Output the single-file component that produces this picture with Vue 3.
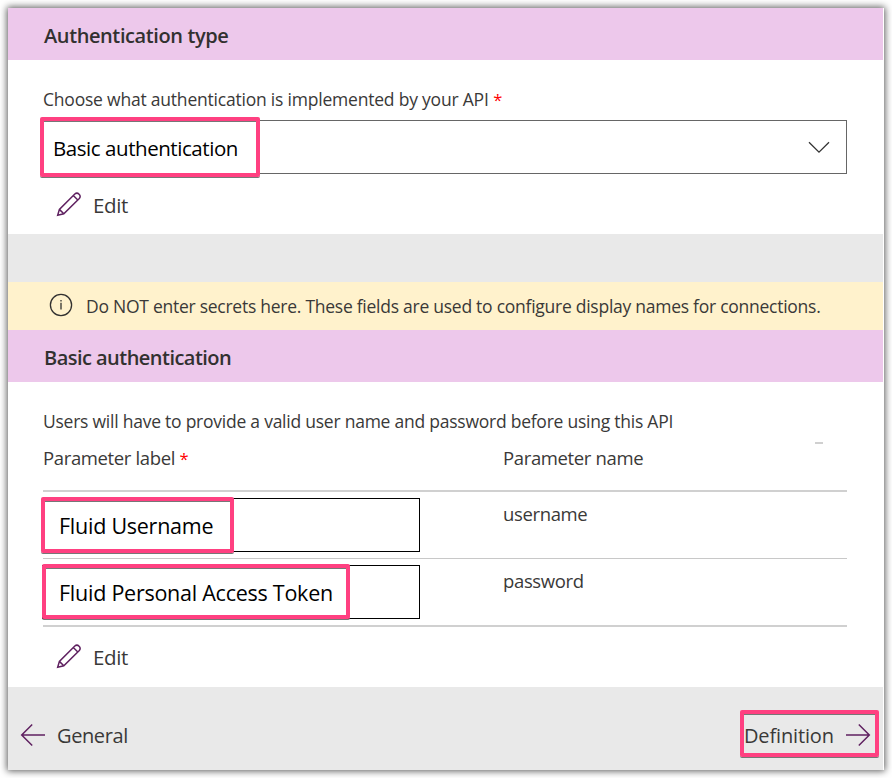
<script setup>
const rows = [
  { label: 'Fluid Username', name: 'username', cls: 'user' },
  { label: 'Fluid Personal Access Token', name: 'password', cls: 'token' },
]
</script>

<template>
  <div class="page">
    <main class="panel">
      <header class="head"><h2 class="h-type">Authentication type</h2></header>
      <section class="auth">
        <label class="small"><span class="t-choose">Choose what authentication is implemented by your API</span> <span class="req">*</span></label>
        <div class="select">
          <span class="t-basic">Basic authentication</span>
          <svg class="chevron" width="22" height="13" viewBox="0 0 22 13"><path d="M1 1.2 11 11.2 21 1.2" /></svg>
          <i class="ring ring-select"></i>
        </div>
        <div class="edit">
          <svg class="pencil" width="26" height="26" viewBox="0 0 26 26"><path d="M1.7 24.3 3.4 18.4 18.8 3a3.2 3.2 0 0 1 4.5 4.5L7.8 22.8ZM3.4 18.4 7.8 22.8M17.3 4.5 21.8 9" /></svg>
          <span>Edit</span>
        </div>
      </section>
      <div class="gap"></div>
      <div class="notice">
        <svg width="24" height="24" viewBox="0 0 24 24"><circle cx="12" cy="12" r="10.6" /><path d="M12 9.7V16.5M12 7v1.4" /></svg>
        <span class="t-notice">Do NOT enter secrets here. These fields are used to configure display names for connections.</span>
      </div>
      <header class="head"><h2 class="h-basic">Basic authentication</h2></header>
      <section class="params">
        <p class="small t-users">Users will have to provide a valid user name and password before using this API</p>
        <div class="cols thead">
          <div>Parameter label <span class="req">*</span></div>
          <div>Parameter name</div>
          <i class="dash"></i>
        </div>
        <div v-for="r in rows" :key="r.name" class="cols row" :class="'row-' + r.cls">
          <div class="input">
            <span>{{ r.label }}</span>
            <i class="ring" :class="'ring-' + r.cls"></i>
          </div>
          <div class="value">{{ r.name }}</div>
        </div>
        <div class="edit">
          <svg class="pencil" width="26" height="26" viewBox="0 0 26 26"><path d="M1.7 24.3 3.4 18.4 18.8 3a3.2 3.2 0 0 1 4.5 4.5L7.8 22.8ZM3.4 18.4 7.8 22.8M17.3 4.5 21.8 9" /></svg>
          <span>Edit</span>
        </div>
      </section>
      <footer class="foot">
        <div class="nav">
          <svg width="26" height="24" viewBox="0 0 26 24"><path d="M25 12H1.8M12.2 1.5 1.7 12 12.2 22.5" /></svg>
          <span class="t-general">General</span>
        </div>
        <div class="nav next">
          <span class="t-def">Definition</span>
          <svg width="26" height="24" viewBox="0 0 26 24"><path d="M1 12H24.2M13.8 1.5 24.3 12 13.8 22.5" /></svg>
          <i class="ring ring-next"></i>
        </div>
      </footer>
    </main>
  </div>
</template>

<style>
html, body { background: #fff; overflow: hidden; }
</style>
<style scoped>
* { box-sizing: border-box; }
.page {
  height: 778px;
  padding: 8px;
  font-family: "Open Sans", "Noto Sans", sans-serif;
  font-size: 20px;
  font-weight: 400;
  line-height: 24px;
  color: #3a3938;
  white-space: nowrap;
}
.panel {
  width: 876px;
  height: 762px;
  padding-right: 1px;
  background: #fff;
  box-shadow: 0 0 7px 1px rgba(0, 0, 0, 0.65);
}
.head { height: 52px; padding: 16px 0 0 36px; background: #edc8eb; }
h2 { margin: 0; font-size: 20px; font-weight: 600; line-height: 24px; color: #323130; }
.h-type { letter-spacing: -0.4px; }
.h-basic { letter-spacing: -0.53px; }
.small { display: block; height: 24px; margin: 0; font-size: 17.5px; }
.t-choose { letter-spacing: -0.21px; }
.t-notice { letter-spacing: -0.26px; }
.t-users { letter-spacing: -0.24px; }
.req { color: #f00; font-size: 16.5px; line-height: 1; }
.auth { height: 174px; padding: 27px 36px 0 35px; }
.select {
  position: relative;
  display: flex;
  align-items: center;
  justify-content: space-between;
  width: 806px;
  height: 54px;
  margin: 9px 0 19px -2px;
  padding: 2px 16px 0 11px;
  border: 1px solid #666;
  color: #000;
}
.t-basic { font-size: 20.5px; letter-spacing: -0.44px; }
svg { display: block; flex: none; fill: none; }
svg.chevron { stroke: #333; stroke-width: 1.3; margin-top: -2px; }
.edit { display: flex; align-items: center; gap: 11px; height: 24px; padding-left: 13px; }
.edit span { margin-top: -1px; letter-spacing: -0.4px; font-size: 20.5px; }
.edit svg { margin-top: -3px; stroke: #5f2160; stroke-width: 1.5; }
.gap { height: 48px; background: #e9e9e9; }
.notice {
  display: flex;
  align-items: center;
  gap: 13px;
  height: 48px;
  padding-left: 41px;
  background: #fff2cc;
  font-size: 17.5px;
}
.notice svg { stroke: #323130; stroke-width: 1.3; margin-top: -2px; }
.params { height: 305px; padding: 27px 36px 0 35px; }
.cols { display: grid; grid-template-columns: 460px 1fr; position: relative; letter-spacing: -0.36px; }
.thead { height: 59px; padding-top: 13px; border-bottom: 2px solid #d0d0d0; font-size: 18.5px; }
.dash { position: absolute; left: 772px; top: 9px; width: 8px; height: 2px; background: #d0d0d0; }
.row { height: 67px; padding-top: 6px; border-bottom: 1px solid #c8c8c8; font-size: 18.5px; }
.row-token { height: 68px; border-bottom: 2px solid #d0d0d0; margin-bottom: 18px; }
.input {
  position: relative;
  width: 378px;
  height: 54px;
  margin-left: -1px;
  padding: 15px 0 0 16px;
  border: 1px solid #000;
  color: #000;
  font-size: 21.5px;
  letter-spacing: -0.25px;
}
.value { padding-top: 4px; }
.ring {
  position: absolute;
  border: 4px solid #ff4081;
  border-radius: 2px;
  box-shadow: 0 1px 0 #777, inset 0 1px 0 #777;
}
.ring-select { left: -2px; top: -4px; width: 220px; height: 60px; }
.ring-user { left: -2px; top: -2px; width: 193px; height: 56px; }
.ring-token { left: -1px; top: -2px; width: 308px; height: 55px; }
.foot {
  display: flex;
  justify-content: space-between;
  height: 83px;
  padding: 36px 12px 0;
  background: #e9e9e9;
}
.nav { position: relative; display: flex; align-items: center; gap: 11px; width: 107px; height: 24px; }
.nav svg { stroke: #5f2160; stroke-width: 1.5; }
.nav span { padding-top: 2px; }
.t-general { letter-spacing: -0.4px; }
.t-def { letter-spacing: -0.15px; }
.next { width: 127px; justify-content: space-between; }
.ring-next { left: -4px; top: -13px; width: 139px; height: 47px; }
</style>
